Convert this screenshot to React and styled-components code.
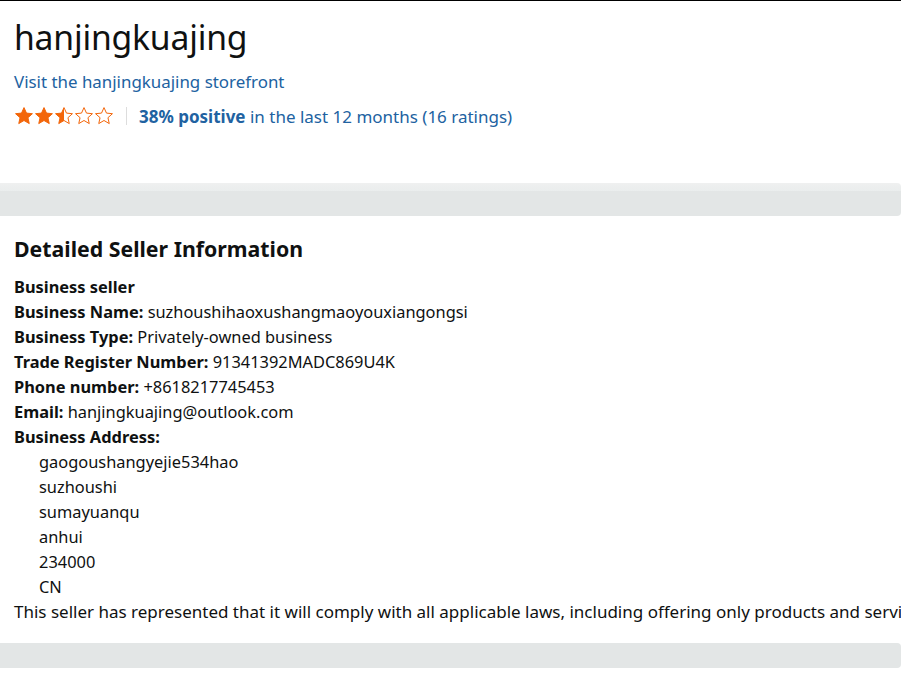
import React from "react";
import styled, { createGlobalStyle } from "styled-components";

const GlobalStyle = createGlobalStyle`
  html, body {
    margin: 0;
    padding: 0;
    background: #fff;
    overflow: hidden;
  }
  body {
    font-family: "Noto Sans", "Open Sans", Arial, sans-serif;
    color: #0f1111;
  }
`;

const Page = styled.div`
  width: 901px;
  height: 680px;
  border-top: 1px solid #000;
  box-sizing: border-box;
  overflow: hidden;
`;

const Header = styled.div`
  padding: 14px 14px 0;
  height: 182px;
  box-sizing: border-box;
`;

const StoreName = styled.h1`
  margin: 0;
  font-size: 33.7px;
  font-weight: 400;
  line-height: 44px;
  letter-spacing: -0.2px;
`;

const StoreLink = styled.a`
  display: block;
  margin-top: 11px;
  color: #2162a1;
  font-size: 16.9px;
  line-height: 24px;
  text-decoration: none;
`;

const RatingRow = styled.div`
  display: flex;
  align-items: center;
  margin-top: 10px;
  height: 24px;
`;

const Stars = styled.div`
  display: flex;
`;

const Divider = styled.span`
  width: 1px;
  height: 18px;
  background: #ddd;
  margin: 0 12px;
`;

const RatingText = styled.span`
  color: #2162a1;
  font-size: 17px;
  b {
    font-weight: 700;
  }
`;

const Band = styled.div`
  height: ${(p) => (p.$flat ? "25px" : "33px")};
  background: ${(p) =>
    p.$flat ? "#e3e6e6" : "linear-gradient(#eff0f0, #eaeded 8px, #e3e6e6 8px)"};
  border-radius: 0 4px 4px 0;
`;

const Details = styled.section`
  padding: 17px 14px 0;
  height: 427px;
  box-sizing: border-box;
  white-space: nowrap;
  overflow: hidden;
`;

const Heading = styled.h2`
  margin: 0 0 9px;
  font-size: 21.3px;
  font-weight: 700;
  line-height: 32px;
`;

const Line = styled.div`
  font-size: 16.4px;
  line-height: 25px;
  padding-left: ${(p) => (p.$indent ? "25px" : "0")};
  font-weight: ${(p) => (p.$strong ? 700 : 400)};
  b {
    font-weight: 700;
  }
`;

const Notice = styled.p`
  margin: 0;
  font-size: 17px;
  line-height: 25px;
`;

const Star = ({ fill }) => {
  const id = `half-${fill}`;
  const d =
    "M10 1.6l2.47 5.5 5.98.6-4.5 4 1.3 5.88L10 14.5l-5.25 3.08 1.3-5.88-4.5-4 5.98-.6z";
  return (
    <svg width="20" height="20" viewBox="0 0 20 20">
      <defs>
        <linearGradient id={id}>
          <stop offset={fill} stopColor="#f3660a" />
          <stop offset={fill} stopColor="#fff" />
        </linearGradient>
      </defs>
      <path d={d} fill={`url(#${id})`} stroke="#f3660a" strokeWidth="1" strokeLinejoin="round" />
    </svg>
  );
};

const fields = [
  ["Business Name:", "suzhoushihaoxushangmaoyouxiangongsi"],
  ["Business Type:", "Privately-owned business"],
  ["Trade Register Number:", "91341392MADC869U4K"],
  ["Phone number:", "+8618217745453"],
  ["Email:", "hanjingkuajing@outlook.com"],
];

const address = ["gaogoushangyejie534hao", "suzhoushi", "sumayuanqu", "anhui", "234000", "CN"];

const App = () => {
  return (
    <Page>
      <GlobalStyle />
      <Header>
        <StoreName>hanjingkuajing</StoreName>
        <StoreLink href="#">Visit the hanjingkuajing storefront</StoreLink>
        <RatingRow>
          <Stars>
            {[1, 1, 0.5, 0, 0].map((f, i) => (
              <Star key={i} fill={f} />
            ))}
          </Stars>
          <Divider />
          <RatingText>
            <b>38% positive</b> in the last 12 months (16 ratings)
          </RatingText>
        </RatingRow>
      </Header>
      <Band />
      <Details>
        <Heading>Detailed Seller Information</Heading>
        <Line $strong>Business seller</Line>
        {fields.map(([k, v]) => (
          <Line key={k}>
            <b>{k}</b> {v}
          </Line>
        ))}
        <Line $strong>Business Address:</Line>
        {address.map((a) => (
          <Line key={a} $indent>
            {a}
          </Line>
        ))}
        <Notice>This seller has represented that it will comply with all applicable laws, including offering only products and servi</Notice>
      </Details>
      <Band $flat />
    </Page>
  );
};

export default App;
